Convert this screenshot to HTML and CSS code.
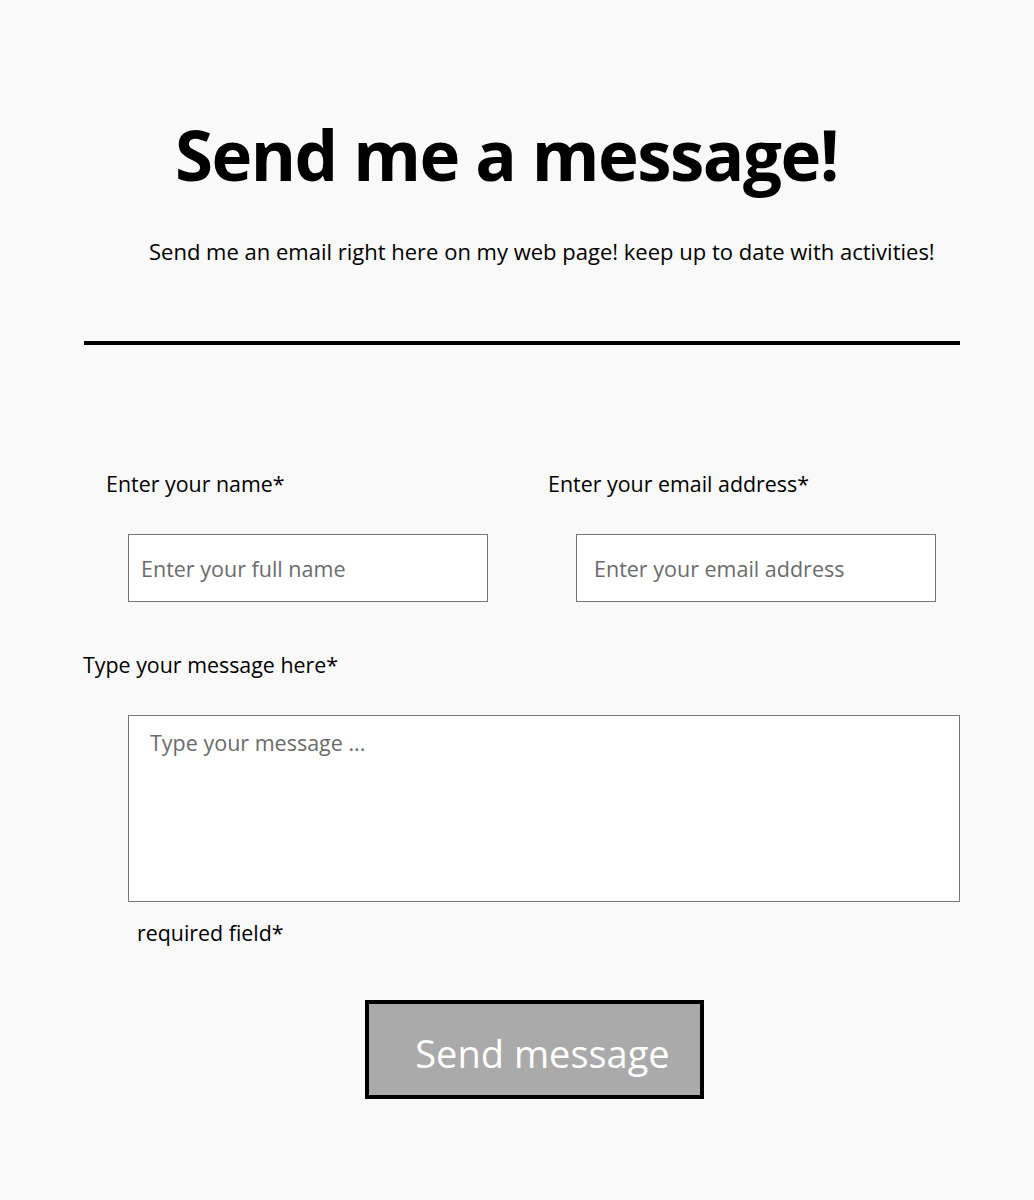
FILE: index.html
```html
<!DOCTYPE html>
<html lang="en">
<head>
<meta charset="utf-8">
<title>Send me a message!</title>
<link rel="stylesheet" href="styles.css">
</head>
<body>
<main class="page">
  <header class="intro">
    <h1 class="title">Send me a message!</h1>
    <p class="lead">Send me an email right here on my web page! keep up to date with activities!</p>
  </header>
  <hr class="rule">
  <form class="form">
    <div class="row">
      <div class="field field-name">
        <label class="label" for="name">Enter your name*</label>
        <input class="input" id="name" type="text" placeholder="Enter your full name">
      </div>
      <div class="field field-email">
        <label class="label" for="email">Enter your email address*</label>
        <input class="input" id="email" type="email" placeholder="Enter your email address">
      </div>
    </div>
    <div class="field field-message">
      <label class="label" for="msg">Type your message here*</label>
      <textarea class="textarea" id="msg" placeholder="Type your message ..."></textarea>
    </div>
    <p class="note">required field*</p>
    <div class="actions">
      <button class="send" type="button">Send message</button>
    </div>
  </form>
</main>
</body>
</html>
```
FILE: styles.css
```css
* { box-sizing: border-box; }

html, body {
  margin: 0;
  padding: 0;
  background: #f9f9f9;
}

body {
  font-family: "Open Sans", "Noto Sans", sans-serif;
  color: #000;
}

.page {
  padding-top: 112px;
}

.title {
  margin: 0;
  padding-left: 175px;
  font-size: 69px;
  line-height: 84px;
  font-weight: 700;
  letter-spacing: -1.5px;
}

.lead {
  margin: 40px 0 0;
  padding-left: 149px;
  font-size: 22px;
  line-height: 30px;
}

.rule {
  margin: 75px 0 0 84px;
  width: 876px;
  height: 4px;
  border: 0;
  background: #000;
}

.form {
  padding-top: 124px;
}

.label {
  display: block;
  font-size: 21.4px;
  line-height: 30px;
}

.row {
  display: flex;
}

.field-name {
  margin-left: 106px;
  width: 442px;
}

.field-email {
  width: 420px;
}

.input {
  display: block;
  margin-top: 35px;
  width: 360px;
  height: 68px;
  padding: 0 12px;
  border: 1px solid #767676;
  background: #fff;
  font-family: inherit;
  font-size: 21.5px;
  color: #000;
}

.field-name .input { margin-left: 22px; }
.field-email .input { margin-left: 28px; padding-left: 17px; }

.input::placeholder,
.textarea::placeholder {
  color: #6b6b6b;
}

.field-message {
  margin-top: 48px;
  margin-left: 83px;
}

.textarea {
  display: block;
  margin: 35px 0 0 45px;
  width: 832px;
  height: 187px;
  padding: 12px 21px;
  border: 1px solid #767676;
  background: #fff;
  font-family: inherit;
  font-size: 21.5px;
  resize: none;
}

.note {
  margin: 16px 0 0 137px;
  font-size: 21.4px;
  line-height: 30px;
}

.actions {
  margin-top: 52px;
  padding-left: 365px;
}

.send {
  width: 339px;
  height: 99px;
  padding: 6px 0 0 16px;
  border: 4px solid #000;
  background: #aaaaaa;
  color: #fff;
  font-family: inherit;
  font-size: 38px;
}
```
